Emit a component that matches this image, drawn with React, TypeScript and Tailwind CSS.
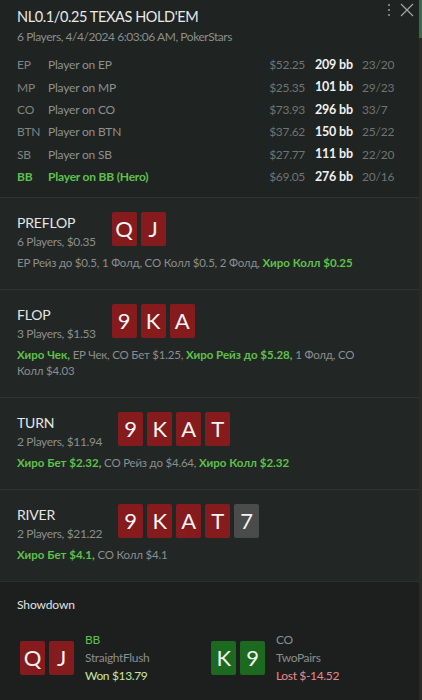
import React from "react"

type Seat = { pos: string; name: string; stack: string; bb: string; stats: string; hero?: boolean }

const seats: Seat[] = [
  { pos: "EP", name: "Player on EP", stack: "$52.25", bb: "209 bb", stats: "23/20" },
  { pos: "MP", name: "Player on MP", stack: "$25.35", bb: "101 bb", stats: "29/23" },
  { pos: "CO", name: "Player on CO", stack: "$73.93", bb: "296 bb", stats: "33/7" },
  { pos: "BTN", name: "Player on BTN", stack: "$37.62", bb: "150 bb", stats: "25/22" },
  { pos: "SB", name: "Player on SB", stack: "$27.77", bb: "111 bb", stats: "22/20" },
  { pos: "BB", name: "Player on BB (Hero)", stack: "$69.05", bb: "276 bb", stats: "20/16", hero: true },
]

type Action = { text: string; hero?: boolean }

type Street = { name: string; info: string; cards: string[]; grey?: number; actions: Action[] }

const streets: Street[] = [
  {
    name: "PREFLOP",
    info: "6 Players, $0.35",
    cards: ["Q", "J"],
    actions: [
      { text: "EP Рейз до $0.5, 1 Фолд, CO Колл $0.5, 2 Фолд, " },
      { text: "Хиро Колл $0.25", hero: true },
    ],
  },
  {
    name: "FLOP",
    info: "3 Players, $1.53",
    cards: ["9", "K", "A"],
    actions: [
      { text: "Хиро Чек,", hero: true },
      { text: " EP Чек, CO Бет $1.25, " },
      { text: "Хиро Рейз до $5.28,", hero: true },
      { text: " 1 Фолд, CO Колл $4.03" },
    ],
  },
  {
    name: "TURN",
    info: "2 Players, $11.94",
    cards: ["9", "K", "A", "T"],
    actions: [
      { text: "Хиро Бет $2.32,", hero: true },
      { text: " CO Рейз до $4.64, " },
      { text: "Хиро Колл $2.32", hero: true },
    ],
  },
  {
    name: "RIVER",
    info: "2 Players, $21.22",
    cards: ["9", "K", "A", "T", "7"],
    grey: 4,
    actions: [
      { text: "Хиро Бет $4.1,", hero: true },
      { text: " CO Колл $4.1" },
    ],
  },
]

function Card({ value, tone = "red" }: { value: string; tone?: "red" | "grey" | "green" }) {
  const bg = tone === "red" ? "bg-[#861b1e]" : tone === "green" ? "bg-[#1b6a1f]" : "bg-[#4a4c4b]"
  return (
    <div className={`${bg} w-[25px] h-[34px] rounded-[2px] flex items-center justify-center text-[22px] leading-none text-[#f4f4f4]`}>
      {value}
    </div>
  )
}

function StreetBlock({ street }: { street: Street }) {
  return (
    <div className="border-t border-[#303433] px-[17px] pt-[14px] pb-[18px] bg-[#222625]">
      <div className="flex items-start gap-[16px]">
        <div className="pt-[1px]">
          <div className="text-[14px] leading-[20px] tracking-[-0.2px] text-[#e4e6e5]">{street.name}</div>
          <div className="text-[12px] leading-[18px] tracking-[-0.35px] text-[#8a8e8c]">{street.info}</div>
        </div>
        <div className="flex gap-[4px]">
          {street.cards.map((c, i) => (
            <Card key={i} value={c} tone={street.grey === i ? "grey" : "red"} />
          ))}
        </div>
      </div>
      <div className="mt-[4px] text-[11.5px] leading-[16px] text-[#8a8e8c] pr-[30px]">
        {street.actions.map((a, i) =>
          a.hero ? (
            <span key={i} className="font-bold text-[#5ec14a]">{a.text}</span>
          ) : (
            <span key={i} className="tracking-[-0.2px]">{a.text}</span>
          )
        )}
      </div>
    </div>
  )
}

function Showdown() {
  return (
    <div className="border-t border-[#2c302f] bg-[#1c1f1e] px-[17px] pt-[14px] pb-[20px]">
      <div className="text-[12px] leading-[18px] tracking-[-0.1px] text-[#e0e2e1]">Showdown</div>
      <div className="flex mt-[17px] pl-[3px] text-[12px] leading-[18px] tracking-[-0.35px]">
        <div className="w-[191px] flex items-center gap-[11px]">
          <div className="flex gap-[4px]">
            <Card value="Q" />
            <Card value="J" />
          </div>
          <div>
            <div className="text-[#5ec14a]">BB</div>
            <div className="text-[#8a8e8c]">StraightFlush</div>
            <div className="text-[#c8e6a2]">Won $13.79</div>
          </div>
        </div>
        <div className="flex items-center gap-[11px]">
          <div className="flex gap-[4px]">
            <Card value="K" tone="green" />
            <Card value="9" tone="green" />
          </div>
          <div>
            <div className="text-[#8a8e8c]">CO</div>
            <div className="text-[#8a8e8c]">TwoPairs</div>
            <div className="text-[#e68a8c]">Lost $-14.52</div>
          </div>
        </div>
      </div>
    </div>
  )
}

export default function App() {
  return (
    <div className="w-[422px] h-[700px] overflow-hidden flex bg-[#212524] font-['Lato','Noto_Sans',sans-serif]">
      <div className="flex-1 min-w-0">
        {/* header */}
        <div className="relative bg-[#1f2322] px-[17px] pt-[6px] pb-[9px]">
          <div className="text-[14.5px] leading-[22px] tracking-[-0.4px] text-[#e8e9e8]">NL0.1/0.25 TEXAS HOLD'EM</div>
          <div className="text-[12px] leading-[18px] tracking-[-0.45px] text-[#8a8e8c]">6 Players, 4/4/2024 6:03:06 AM, PokerStars</div>
          <div className="absolute top-[3px] right-[5px] flex items-center gap-[9px]">
            <svg width="4" height="14" viewBox="0 0 4 14" fill="#9a9e9c">
              <circle cx="2" cy="2" r="1" />
              <circle cx="2" cy="7" r="1" />
              <circle cx="2" cy="12" r="1" />
            </svg>
            <svg width="14" height="14" viewBox="0 0 14 14" stroke="#a2a6a4" strokeWidth="1.2" fill="none">
              <path d="M1 1L13 13M13 1L1 13" />
            </svg>
          </div>
          <div className="mt-[8px] text-[12px] tracking-[-0.2px]">
            {seats.map((s) => (
              <div key={s.pos} className="flex items-center h-[22.4px]">
                <div className={`w-[31px] ${s.hero ? "text-[#5ec14a] font-bold" : "text-[#7f8381]"}`}>{s.pos}</div>
                <div className={`flex-1 ${s.hero ? "text-[#5ec14a] font-bold" : "text-[#8d918f]"}`}>{s.name}</div>
                <div className="w-[60px] text-right text-[#707472] tracking-[-0.3px]">{s.stack}</div>
                <div className="ml-[10px] w-[47px] text-[12.5px] font-bold text-[#f0f1f0]">{s.bb}</div>
                <div className="w-[40px] text-[#6f7371]">{s.stats}</div>
              </div>
            ))}
          </div>
        </div>
        {streets.map((st) => (
          <StreetBlock key={st.name} street={st} />
        ))}
        <Showdown />
      </div>
      {/* scrollbar */}
      <div className="w-[3px] bg-[#2a2b29]">
        <div className="h-[38px] bg-[#3a6b47]" />
      </div>
    </div>
  )
}
